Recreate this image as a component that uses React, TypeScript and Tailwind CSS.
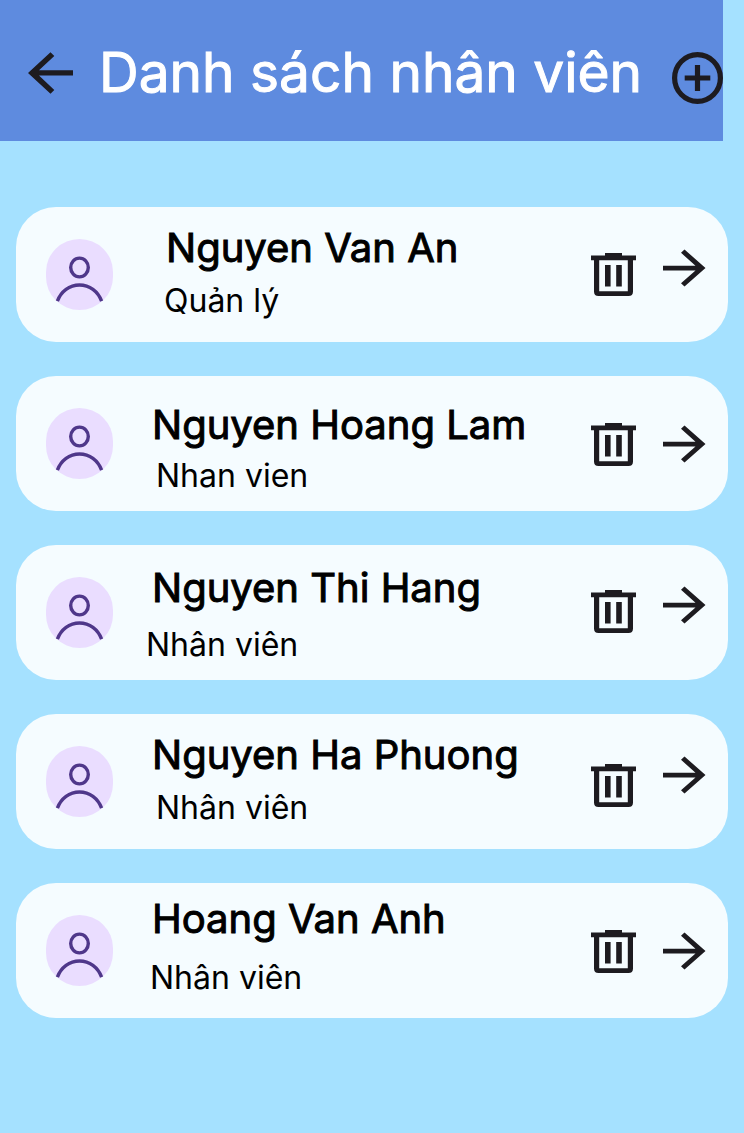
type Employee = {
  name: string;
  role: string;
  nameClass: string;
  roleClass: string;
  textClass: string;
  trashClass: string;
  arrowClass: string;
};

const employees: Employee[] = [
  { name: "Nguyen Van An", role: "Quản lý", nameClass: "pl-[18px]", roleClass: "pl-4", textClass: "pt-[17px] gap-[9px]", trashClass: "pt-[46px]", arrowClass: "pt-[42px]" },
  { name: "Nguyen Hoang Lam", role: "Nhan vien", nameClass: "pl-1", roleClass: "pl-2", textClass: "pt-[25px] gap-[7px]", trashClass: "pt-[47px]", arrowClass: "pt-[49px]" },
  { name: "Nguyen Thi Hang", role: "Nhân viên", nameClass: "pl-1", roleClass: "-ml-0.5", textClass: "pt-[19px] gap-[13px]", trashClass: "pt-[45px]", arrowClass: "pt-[41px]" },
  { name: "Nguyen Ha Phuong", role: "Nhân viên", nameClass: "pl-1", roleClass: "pl-2", textClass: "pt-[17px] gap-[9px]", trashClass: "pt-[50px]", arrowClass: "pt-[42px]" },
  { name: "Hoang Van Anh", role: "Nhân viên", nameClass: "pl-1", roleClass: "pl-0.5", textClass: "pt-[12px] gap-[15px]", trashClass: "pt-[47px]", arrowClass: "pt-[49px]" },
];

function BackIcon() {
  return (
    <svg className="block" width="45" height="42" viewBox="0 0 45 42" fill="#1D1B20" aria-hidden="true">
      <path d="M22.5 .3 26.3 4 11 18.2H45v5.3H11L26.3 38 22.5 41.7 0 21Z" />
    </svg>
  );
}

function AddIcon() {
  return (
    <svg className="block" width="51" height="52" viewBox="0 0 51 52" fill="none" stroke="#1D1B20" strokeWidth="5.2" aria-hidden="true">
      <ellipse cx="25.5" cy="26" rx="22.9" ry="23.4" />
      <path d="M12.7 26H38.3M25.5 13V39" />
    </svg>
  );
}

function AvatarIcon() {
  return (
    <svg className="block shrink-0" width="67" height="71" viewBox="0 0 67 71" fill="none" aria-hidden="true">
      <rect width="67" height="71" rx="33.5" ry="33" fill="#EADDFF" />
      <ellipse cx="33.5" cy="28.5" rx="8.8" ry="9.4" stroke="#4F378A" strokeWidth="3.4" />
      <path d="M11.4 62.2C15 52.5 23.5 46 33.5 46S52 52.5 55.6 62.2" stroke="#4F378A" strokeWidth="3.4" />
    </svg>
  );
}

function TrashIcon() {
  return (
    <svg className="block" width="45" height="43" viewBox="0 0 45 43" fill="#1D1B20" aria-hidden="true">
      <path d="M14 0H31V2.4H45V7.2H42V38.5Q42 43 37.5 43H7.5Q3 43 3 38.5V7.2H0V2.4H14ZM8.2 7.2V38.3H36.8V7.2Z" />
      <path d="M14 12H19.6V33.5H14ZM25.2 12H30.8V33.5H25.2Z" />
    </svg>
  );
}

function ArrowIcon() {
  return (
    <svg className="block" width="43" height="38" viewBox="0 0 43 38" fill="#1D1B20" aria-hidden="true">
      <path d="M21.5 .5 42.5 19 21.5 37.5 18 34.2 32.5 21.4H0V16.7H32.5L18 3.8Z" />
    </svg>
  );
}

function EmployeeRow({ employee }: { employee: Employee }) {
  return (
    <li className="flex h-[135px] items-start rounded-[40px] bg-[#F5FCFF] pr-[22px] pl-[30px]">
      <div className="pt-8">
        <AvatarIcon />
      </div>
      <div className={`ml-[35px] flex min-w-0 flex-1 flex-col whitespace-nowrap text-black ${employee.textClass}`}>
        <h2 className={`text-[40px] leading-[48px] font-normal [-webkit-text-stroke:1px_black] ${employee.nameClass}`}>
          {employee.name}
        </h2>
        <p className={`text-[32px] leading-[40px] font-normal ${employee.roleClass}`}>{employee.role}</p>
      </div>
      <div className={employee.trashClass}>
        <button type="button" className="block" aria-label={`Xóa ${employee.name}`}>
          <TrashIcon />
        </button>
      </div>
      <div className={`ml-[27px] ${employee.arrowClass}`}>
        <a href="#" className="block" aria-label={`Xem ${employee.name}`}>
          <ArrowIcon />
        </a>
      </div>
    </li>
  );
}

export default function App() {
  return (
    <div className="min-h-screen bg-[#A5E1FF] font-['Inter',sans-serif]">
      <header className="mr-[21px] flex h-[141px] items-start bg-[#5E8BDF] pl-7">
        <button type="button" className="mt-[52px] block" aria-label="Quay lại">
          <BackIcon />
        </button>
        <h1 className="mt-[38px] ml-[26px] flex-1 text-[55px] leading-[68px] font-normal whitespace-nowrap text-white [-webkit-text-stroke:1px_white]">
          Danh sách nhân viên
        </h1>
        <button type="button" className="mt-[52px] block shrink-0" aria-label="Thêm nhân viên">
          <AddIcon />
        </button>
      </header>
      <main className="px-4 pt-[66px] pb-10">
        <ul className="flex flex-col gap-[34px]">
          {employees.map((employee) => (
            <EmployeeRow key={employee.name} employee={employee} />
          ))}
        </ul>
      </main>
    </div>
  );
}
